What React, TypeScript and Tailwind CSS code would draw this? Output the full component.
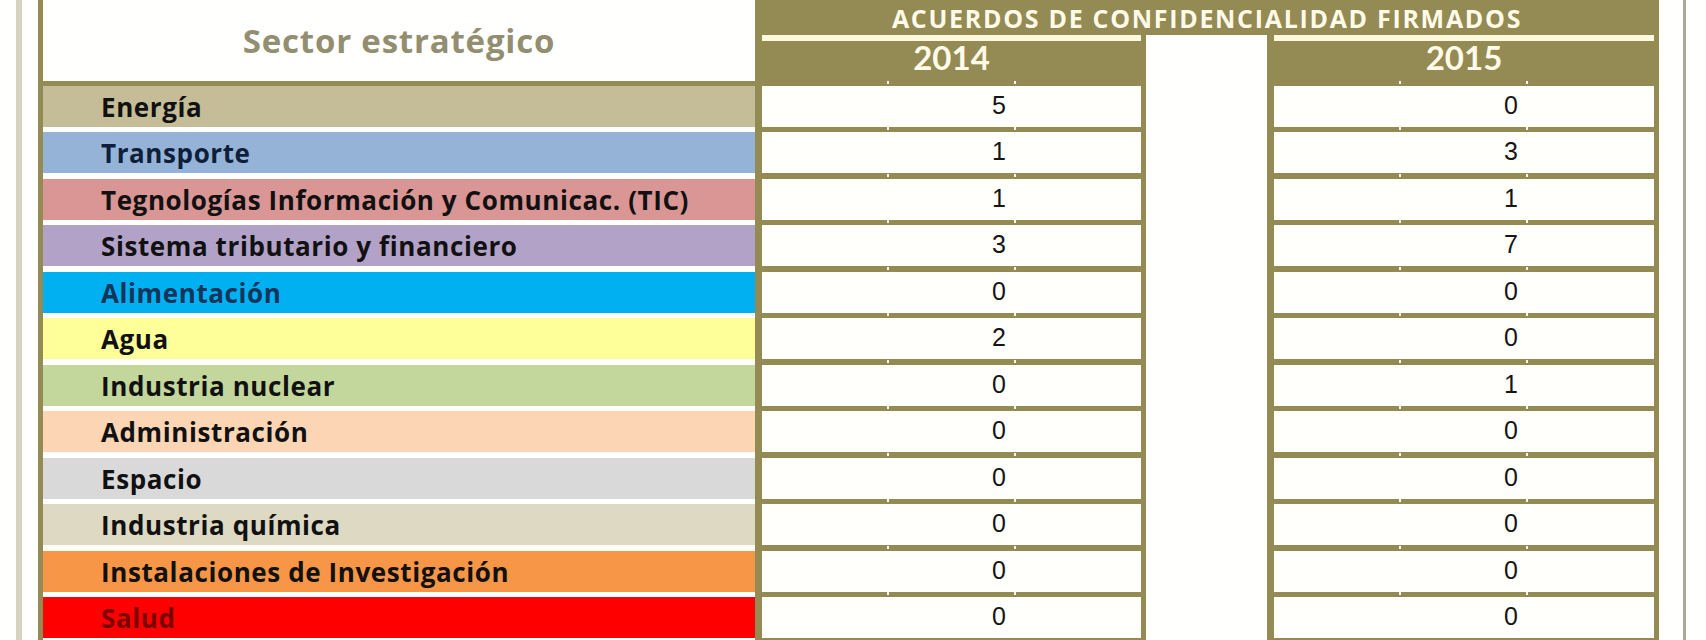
import React from "react";

type Row = { label: string; bg: string; fg: string; a: string; b: string };

const rows: Row[] = [
  { label: "Energía", bg: "bg-[#c4bd97]", fg: "text-[#111111]", a: "5", b: "0" },
  { label: "Transporte", bg: "bg-[#95b3d7]", fg: "text-[#0f1f3a]", a: "1", b: "3" },
  { label: "Tegnologías Información y Comunicac. (TIC)", bg: "bg-[#d99694]", fg: "text-[#111111]", a: "1", b: "1" },
  { label: "Sistema tributario y financiero", bg: "bg-[#b3a2c7]", fg: "text-[#111111]", a: "3", b: "7" },
  { label: "Alimentación", bg: "bg-[#00b0f0]", fg: "text-[#15345a]", a: "0", b: "0" },
  { label: "Agua", bg: "bg-[#ffff99]", fg: "text-[#111111]", a: "2", b: "0" },
  { label: "Industria nuclear", bg: "bg-[#c3d69b]", fg: "text-[#111111]", a: "0", b: "1" },
  { label: "Administración", bg: "bg-[#fcd5b4]", fg: "text-[#111111]", a: "0", b: "0" },
  { label: "Espacio", bg: "bg-[#d9d9d9]", fg: "text-[#111111]", a: "0", b: "0" },
  { label: "Industria química", bg: "bg-[#ddd9c3]", fg: "text-[#111111]", a: "0", b: "0" },
  { label: "Instalaciones de Investigación", bg: "bg-[#f79646]", fg: "text-[#111111]", a: "0", b: "0" },
  { label: "Salud", bg: "bg-[#ff0000]", fg: "text-[#7a0000]", a: "0", b: "0" },
];

const tops = rows.map((_, i) => Math.round(46.45 * i));
const tall = rows.map((_, i) => {
  const next = Math.round(46.45 * (i + 1));
  return next - tops[i] === 47;
});

const OPEN = "font-['Open_Sans','Liberation_Sans',sans-serif]";
const LATO = "font-['Lato','Liberation_Sans',sans-serif]";
const NUM_FONT = "font-['Liberation_Sans','Arial',sans-serif]";

function DataColumn({ year, values }: { year: string; values: string[] }) {
  return (
    <div className="flex flex-col bg-[#948a54] pl-[7px] pr-[5px]">
      <div className="h-[6px] bg-[#fdf9dd]" />
      <div className="h-[45px] flex items-center justify-center pb-[12px]">
        <span className={`${LATO} font-bold text-[33px] leading-none text-[#fffbe8]`}>
          {year}
        </span>
      </div>
      {values.map((v, i) => (
        <div key={i} className={`${tall[i] ? "h-[47px]" : "h-[46px]"} flex flex-col shrink-0`}>
          <div className="relative h-[41px] shrink-0 bg-[#fffffb] flex items-center">
            <span className="absolute left-[125px] -top-[5px] w-[2px] h-[3px] bg-[#fbf7e4]" />
            <span className="absolute left-[252px] -top-[5px] w-[2px] h-[3px] bg-[#fbf7e4]" />
            <span className="pl-[225px] w-[249px] text-center">
              <span className={`${NUM_FONT} text-[25px] leading-none text-[#151515]`}>{v}</span>
            </span>
          </div>
        </div>
      ))}
    </div>
  );
}

export default function App() {
  return (
    <div className="w-[1706px] h-[640px] overflow-hidden bg-[#fffffd] flex">
      <div className="w-[16px] shrink-0" />
      <div className="w-[6px] shrink-0 bg-[#d4d2c0]" />
      <div className="w-[16px] shrink-0" />

      {/* Left column: sectors */}
      <div className="w-[717px] shrink-0 border-l-[5px] border-[#948a54] flex flex-col">
        <div className="h-[86px] shrink-0 border-b-[5px] border-[#948a54] bg-[#fffffd] flex items-center justify-center">
          <span className={`${OPEN} font-bold text-[33px] leading-none text-[#938e70] tracking-[0.8px]`}>
            Sector estratégico
          </span>
        </div>
        {rows.map((r, i) => (
          <div key={r.label} className={`${tall[i] ? "h-[47px]" : "h-[46px]"} shrink-0 flex flex-col bg-[#fffffb]`}>
            <div className={`h-[41px] shrink-0 ${r.bg} flex items-center pl-[58px]`}>
              <span className={`${OPEN} font-bold text-[26px] leading-none ${r.fg} tracking-[0.6px]`}>
                {r.label}
              </span>
            </div>
          </div>
        ))}
      </div>

      {/* Right block: agreements */}
      <div className="w-[904px] shrink-0 flex flex-col">
        <div className="h-[35px] shrink-0 bg-[#948a54] flex items-center justify-center">
          <span className={`${OPEN} font-bold text-[25px] leading-none text-[#fffbe8] tracking-[1.7px] pt-[1px]`}>
            ACUERDOS DE CONFIDENCIALIDAD FIRMADOS
          </span>
        </div>
        <div className="flex">
          <div className="w-[391px] shrink-0">
            <DataColumn year="2014" values={rows.map((r) => r.a)} />
          </div>
          <div className="w-[121px] shrink-0 bg-[#fffffd]" />
          <div className="w-[392px] shrink-0">
            <DataColumn year="2015" values={rows.map((r) => r.b)} />
          </div>
        </div>
      </div>

      <div className="w-[24px] shrink-0" />
      <div className="w-[3px] shrink-0 bg-[#a9a799]" />
    </div>
  );
}
